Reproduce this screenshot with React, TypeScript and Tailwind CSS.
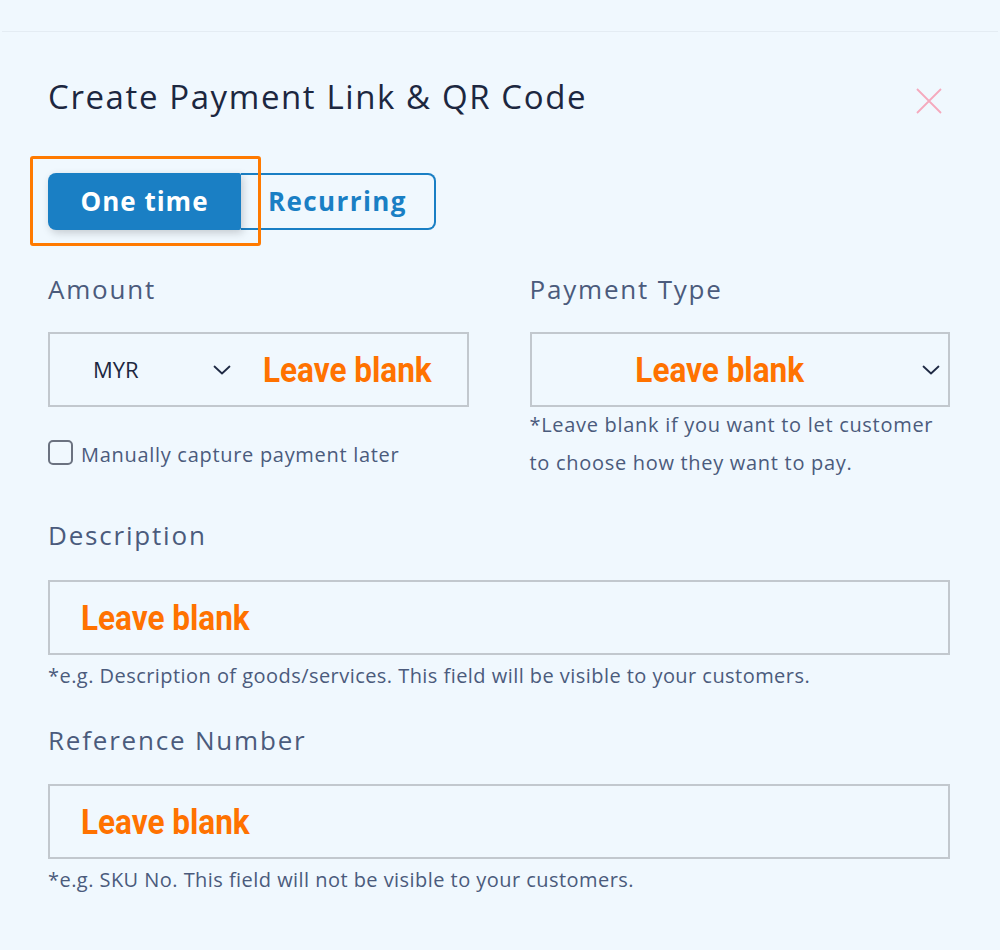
import React from "react";

const font = { fontFamily: '"Open Sans", "Noto Sans", sans-serif' };
const anno =
  "inline-block font-['Roboto',sans-serif] font-bold text-[35px] text-[#ff7200] leading-none scale-x-[0.9]";

function Chevron({ className = "" }: { className?: string }) {
  return (
    <svg width="18" height="10" viewBox="0 0 18 10" className={className} fill="none">
      <path d="M1.5 1.5 L9 8.5 L16.5 1.5" stroke="#1f2a44" strokeWidth="1.8" strokeLinecap="round" strokeLinejoin="round" />
    </svg>
  );
}

const label = "text-[26px] leading-[34px] text-[#4b5b7c] tracking-[1.8px]";
const helper = "text-[20px] text-[#4b5b7c] tracking-[0.7px]";
const small = "mt-[7px] text-[20px] leading-[28px] text-[#4b5b7c] tracking-[0.45px]";

export default function App() {
  return (
    <div className="min-h-[950px] w-[1000px] bg-[#f0f8fe] pt-[31px]" style={font}>
      <div className="mx-[2px] border-t border-[#e4ecf3] min-h-[919px] pl-[46px] pr-[48px]">
        <div className="flex items-center justify-between pt-[46px]">
          <h1 className="text-[33px] leading-[38px] text-[#1c2740] tracking-[1.6px]">Create Payment Link &amp; QR Code</h1>
          <svg width="26" height="26" viewBox="0 0 26 26" className="mr-[8px] mt-[8px]">
            <path d="M1 1 L25 25 M25 1 L1 25" stroke="#f5a9bd" strokeWidth="1.8" />
          </svg>
        </div>

        <div className="mt-[57px] relative w-[388px]">
          <div className="absolute left-[-18px] top-[-17px] w-[231px] h-[90px] border-[3px] border-[#ff7a00] rounded-[3px] z-10" />
          <div className="flex h-[57px]">
            <div className="w-[193px] bg-[#1a7fc4] rounded-l-[8px] rounded-r-[2px] flex items-center justify-center text-white font-bold text-[26px] tracking-[1px] shadow-[2px_3px_8px_rgba(0,0,0,0.18)] relative z-[1]">
              One time
            </div>
            <div className="w-[195px] border-2 border-l-0 border-[#1a7fc4] rounded-r-[8px] flex items-center pl-[27px] text-[#1a7fc4] font-bold text-[26px] tracking-[1.4px]">
              Recurring
            </div>
          </div>
        </div>

        <div className="grid grid-cols-2 gap-x-[61px] mt-[42px]">
          <div>
            <div className={label}>Amount</div>
            <div className="mt-[26px] h-[75px] border-2 border-[#c2c8ce] flex items-center">
              <span className="ml-[43px] text-[22px] text-[#1c2740] w-[120px]">MYR</span>
              <Chevron />
              <span className={anno + " origin-left ml-[32px] mt-[2px]"}>Leave blank</span>
            </div>
            <label className="flex items-start mt-[33px] gap-[8px]">
              <span className="w-[25px] h-[25px] border-2 border-[#6b7280] rounded-[5px] bg-transparent shrink-0" />
              <span className={helper + " leading-[28px] mt-[1px]"}>Manually capture payment later</span>
            </label>
          </div>
          <div>
            <div className={label}>Payment Type</div>
            <div className="mt-[26px] h-[75px] border-2 border-[#c2c8ce] flex items-center">
              <span className="flex-1 text-center pr-[14px] mt-[2px]">
                <span className={anno + " origin-center"}>Leave blank</span>
              </span>
              <Chevron className="mr-[8px]" />
            </div>
            <p className={helper + " leading-[38px] mt-[-1px]"}>
              *Leave blank if you want to let customer<br />to choose how they want to pay.
            </p>
          </div>
        </div>

        <div className="mt-[36px]">
          <div className={label}>Description</div>
          <div className="mt-[28px] h-[75px] border-2 border-[#c2c8ce] flex items-center pl-[31px]">
            <span className={anno + " origin-left mt-[2px]"}>Leave blank</span>
          </div>
          <p className={small}>
            *e.g. Description of goods/services. This field will be visible to your customers.
          </p>
        </div>

        <div className="mt-[33px]">
          <div className={label}>Reference Number</div>
          <div className="mt-[27px] h-[75px] border-2 border-[#c2c8ce] flex items-center pl-[31px]">
            <span className={anno + " origin-left mt-[2px]"}>Leave blank</span>
          </div>
          <p className={small}>
            *e.g. SKU No. This field will not be visible to your customers.
          </p>
        </div>
      </div>
    </div>
  );
}
